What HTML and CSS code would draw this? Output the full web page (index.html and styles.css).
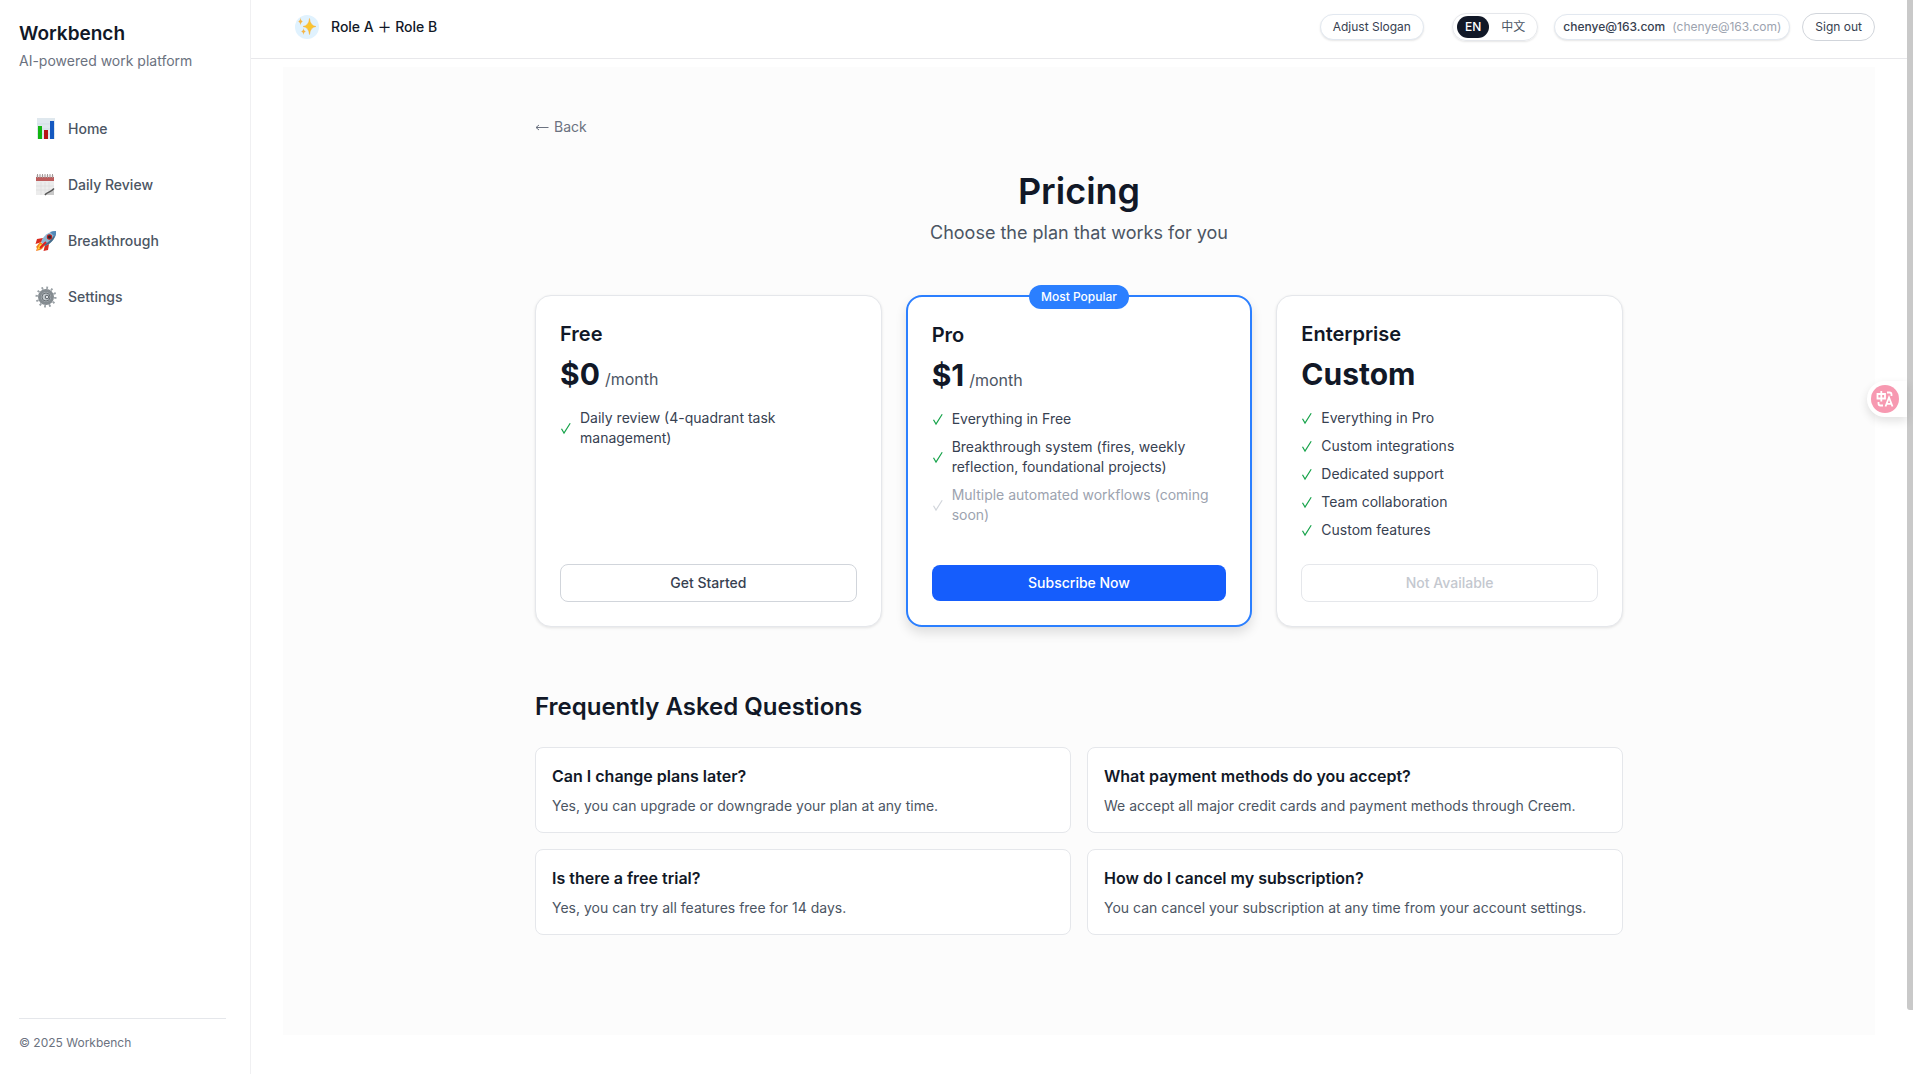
FILE: index.html
```html
<!DOCTYPE html>
<html lang="en">
<head>
<meta charset="utf-8">
<title>Pricing – Workbench</title>
<meta name="viewport" content="width=device-width, initial-scale=1">
<link rel="stylesheet" href="styles.css">
</head>
<body>
<svg class="sprite" aria-hidden="true">
  <symbol id="check" viewBox="0 0 12 16"><path d="M1.5 8.8 4 13 10.2 3.2" fill="none" stroke="currentColor" stroke-width="1.2"/></symbol>
</svg>
<div class="app">
  <aside class="sidebar">
    <div class="brand">Workbench</div>
    <p class="tagline">AI-powered work platform</p>
    <nav class="nav">
      <a class="nav-item" href="#home">
        <svg class="nav-icon" viewBox="0 0 22 22"><rect x="2" y="0" width="18" height="21" fill="#dfe8ee"/><path d="M2 6h18M2 11h18M2 16h18" stroke="#cbd8e2" stroke-width=".6"/><rect x="3" y="8" width="4" height="13" fill="#12b512"/><rect x="9" y="12" width="4" height="9" fill="#b81414"/><rect x="15" y="3" width="4" height="18" fill="#1458c0"/></svg>
        Home</a>
      <a class="nav-item" href="#daily">
        <svg class="nav-icon" viewBox="0 0 22 22"><path d="M1 1h18v20H1z" fill="#ececec"/><path d="M1 12h18M1 16h18M6 8v13M10 8v13M14 8v13" stroke="#dadada" stroke-width=".6"/><path d="M1 3h18v4H1z" fill="#bd5c5c"/><path d="M2.500 0v4M5 0v4M7.500 0v4M10 0v4M12.500 0v4M15 0v4M17.500 0v4" stroke="#a39797"/><path d="M10 21q2-3 9-6v6z" fill="#c8c8c8"/><path d="M10 21c2-3 5-2 9-6.500" fill="none" stroke="#555" stroke-width="1.500"/></svg>
        Daily Review</a>
      <a class="nav-item" href="#breakthrough">
        <svg class="nav-icon" viewBox="0 0 22 22"><path d="M8 8 2 9l-1.500 5L7 12zM14 14l-1 6-4.500 1L10 15z" fill="#d92b20"/><path d="m5 12-4 5 1 1-1 3 4-1 2-1 3-4z" fill="#f58220"/><path d="m5 14-3 6 5-3 1-2z" fill="#ffe03a"/><path d="M21 1c-7 0-13 5-15 11l4 4C17 13 21 8 21 1z" fill="#8fb6d2"/><path d="M21 1c-2 6-6 11-12.500 13.500L10 16C17 13 21 8 21 1z" fill="#476c89"/><path d="M21 1c-2 0-4 .4-6 1l5 5c.7-2 1-4 1-6z" fill="#5289b9"/><circle cx="14.500" cy="7" r="2.700" fill="#b51f1f"/><circle cx="14.500" cy="7" r="1.600" fill="#252b38"/><path d="m5 18 6-6" stroke="#e02020" stroke-width="2"/></svg>
        Breakthrough</a>
      <a class="nav-item" href="#settings">
        <svg class="nav-icon" viewBox="0 0 22 22"><circle cx="11" cy="11" r="9.300" fill="none" stroke="#9aa1a6" stroke-width="2.400" stroke-dasharray="1.800 3.069"/><circle cx="11" cy="11" r="6.500" fill="#a7adb2" stroke="#858c91" stroke-width="3"/><circle cx="11" cy="11" r="4" fill="#c3c9cd" stroke="#6b7277"/><circle cx="12" cy="11" r="1.800" fill="#dfe3e6" stroke="#596066"/></svg>
        Settings</a>
    </nav>
    <footer class="side-footer">© 2025 Workbench</footer>
  </aside>

  <div class="main">
    <header class="topbar">
      <div class="slogan">
        <span class="slogan-icon"><svg viewBox="0 0 24 24"><path d="M14.500 3.500q.7 7.300 6.500 8-5.800.7-6.500 8-.7-7.300-6.500-8 5.800-.7 6.500-8z" fill="#fac52f" stroke="#f5ad3c" stroke-width=".5"/><path d="M5.500 2.500q.3 3.700 2.700 4-2.400.3-2.700 4-.3-3.700-2.700-4 2.400-.3 2.700-4zM8.500 13q.3 3.200 2.700 3.500-2.400.3-2.700 3.500-.3-3.200-2.700-3.500 2.400-.3 2.700-3.500z" fill="#f6b547"/></svg></span>
        <span class="slogan-text">Role A ＋ Role B</span>
        <button class="pill adjust">Adjust Slogan</button>
      </div>
      <div class="account">
        <div class="lang"><button class="lang-btn active">EN</button><button class="lang-btn">中文</button></div>
        <div class="pill user"><span>chenye@163.com</span><span class="muted">(chenye@163.com)</span></div>
        <button class="pill sign-out">Sign out</button>
      </div>
    </header>

    <main class="page">
      <div class="container">
        <a class="back" href="#back"><svg class="arrow" viewBox="0 0 14 10"><path d="M13.500 5.500H1M4 3 1 5.500 4 8" fill="none" stroke="currentColor"/></svg>Back</a>
        <div class="intro">
          <h1>Pricing</h1>
          <p>Choose the plan that works for you</p>
        </div>

        <section class="plans">
          <article class="plan">
            <h2>Free</h2>
            <div class="price">$0 <span>/month</span></div>
            <ul>
              <li><svg><use href="#check"/></svg>Daily review (4-quadrant task management)</li>
            </ul>
            <button class="btn">Get Started</button>
          </article>
          <article class="plan featured">
            <span class="badge">Most Popular</span>
            <h2>Pro</h2>
            <div class="price">$1 <span>/month</span></div>
            <ul>
              <li><svg><use href="#check"/></svg>Everything in Free</li>
              <li><svg><use href="#check"/></svg>Breakthrough system (fires, weekly reflection, foundational projects)</li>
              <li class="soon"><svg><use href="#check"/></svg>Multiple automated workflows (coming soon)</li>
            </ul>
            <button class="btn primary">Subscribe Now</button>
          </article>
          <article class="plan">
            <h2>Enterprise</h2>
            <div class="price">Custom</div>
            <ul>
              <li><svg><use href="#check"/></svg>Everything in Pro</li>
              <li><svg><use href="#check"/></svg>Custom integrations</li>
              <li><svg><use href="#check"/></svg>Dedicated support</li>
              <li><svg><use href="#check"/></svg>Team collaboration</li>
              <li><svg><use href="#check"/></svg>Custom features</li>
            </ul>
            <button class="btn" disabled>Not Available</button>
          </article>
        </section>

        <section class="faq">
          <h2>Frequently Asked Questions</h2>
          <div class="faq-grid">
            <article><h3>Can I change plans later?</h3><p>Yes, you can upgrade or downgrade your plan at any time.</p></article>
            <article><h3>What payment methods do you accept?</h3><p>We accept all major credit cards and payment methods through Creem.</p></article>
            <article><h3>Is there a free trial?</h3><p>Yes, you can try all features free for 14 days.</p></article>
            <article><h3>How do I cancel my subscription?</h3><p>You can cancel your subscription at any time from your account settings.</p></article>
          </div>
        </section>
      </div>
    </main>
  </div>
  <div class="scrollbar"></div>
</div>
<button class="translate" aria-label="Translate">
  <svg viewBox="0 0 28 28"><circle cx="14" cy="14" r="14" fill="#f799b1"/><g fill="none" stroke="#fff" stroke-width="1.800"><path d="M6.500 9h7.500v4.500H6.500zM10.300 6v10.500"/><path d="M16 7.500h2.500q2 0 2 2V11M12 20.500H9.500q-2 0-2-2V17"/><path d="m14.500 21.500 3.500-9 3.500 9M15.800 18.800h4.500"/></g></svg>
</button>
</body>
</html>
```
FILE: styles.css
```css
* { box-sizing: border-box; }
body, h1, h2, h3, p, ul { margin: 0; padding: 0; }
body {
  font-family: Inter, "Noto Sans CJK SC", sans-serif;
  font-size: 14px;
  line-height: 20px;
  color: #111827;
  background: #fff;
}
button { font: inherit; color: inherit; cursor: pointer; }
a { color: inherit; text-decoration: none; }
.sprite { display: none; }
.app { display: flex; min-height: 100vh; }

/* Sidebar */
.sidebar {
  display: flex;
  flex-direction: column;
  flex: none;
  width: 251px;
  padding: 20px 24px 23px 19px;
  border-right: 1px solid #f0f0f2;
}
.brand { font-size: 19px; line-height: 28px; font-weight: 600; }
.tagline { margin-top: 3px; color: #6b7280; }
.nav { display: flex; flex-direction: column; gap: 16px; margin-top: 38px; }
.nav-item {
  display: flex;
  align-items: center;
  gap: 11px;
  height: 40px;
  padding-left: 16px;
  font-weight: 500;
  color: #4b5563;
}
.nav-icon { width: 22px; height: 22px; }
.side-footer {
  margin-top: auto;
  padding-top: 16px;
  border-top: 1px solid #e5e7eb;
  font-size: 12px;
  line-height: 16px;
  color: #6b7280;
}

/* Header */
.main { flex: 1; min-width: 0; }
.topbar {
  display: flex;
  align-items: center;
  gap: 16px;
  height: 59px;
  padding: 0 32px 4px;
  border-bottom: 1px solid #e8e8eb;
}
.slogan {
  display: flex;
  align-items: center;
  flex: 1;
  padding: 6px 12px;
  border-radius: 8px;
}
.slogan-icon { width: 24px; height: 24px; border-radius: 50%; background: #e0f2fe; }
.slogan-icon svg { display: block; }
.slogan-text { margin-left: 12px; font-weight: 500; }
.pill {
  height: 26px;
  padding: 0 12px;
  border: 1px solid #e2e8f0;
  border-radius: 13px;
  background: #fff;
  font-size: 12px;
  line-height: 16px;
  font-weight: 500;
  color: #374151;
  box-shadow: 0 1px 2px #0000001a;
}
.adjust { margin-left: auto; font-weight: 400; }
.account { display: flex; align-items: center; }
.lang {
  display: flex;
  gap: 4px;
  height: 28px;
  padding: 2px 4px;
  border: 1px solid #e5e7eb;
  border-radius: 14px;
  box-shadow: 0 1px 2px #0000001a;
}
.lang-btn {
  padding: 0 8px;
  border: 0;
  border-radius: 11px;
  background: none;
  font-size: 12px;
  line-height: 16px;
  color: #4b5563;
  min-width: 40px;
}
.lang-btn.active { min-width: 32px; background: #111827; color: #fff; font-weight: 500; }
.user { display: flex; align-items: center; gap: 7px; margin-left: 16px; padding: 0 8px; }
.muted { font-weight: 400; color: #9ca3af; }
.sign-out { height: 28px; margin-left: 12px; border-color: #d1d5db; border-radius: 14px; box-shadow: none; font-weight: 400; }

/* Page */
.page { margin: 8px 32px 39px; background: #fcfcfc; }
.container { max-width: 1152px; margin: 0 auto; padding: 48px 32px 100px; }
.back { display: inline-flex; align-items: center; gap: 5px; height: 24px; color: #6b7280; }
.arrow { width: 14px; height: 10px; }
.intro { margin: 32px 0 48px; text-align: center; }
h1 { font-size: 36px; line-height: 40px; font-weight: 600; }
.intro p { margin-top: 8px; font-size: 18px; line-height: 28px; color: #4b5563; }

.plans { display: grid; grid-template-columns: repeat(3, minmax(0, 1fr)); gap: 24px; }
.plan {
  position: relative;
  display: flex;
  flex-direction: column;
  padding: 24px;
  border: 1px solid #e5e7eb;
  border-radius: 16px;
  background: #fff;
  box-shadow: 0 1px 3px #0000001a;
}
.plan.featured { border: 2px solid #2b7fff; box-shadow: 0 6px 12px #0000001f; }
.plan h2 { font-size: 20px; line-height: 28px; font-weight: 600; }
.badge {
  position: absolute;
  top: -12px;
  left: 50%;
  transform: translateX(-50%);
  padding: 4px 12px;
  border-radius: 12px;
  background: #2b7fff;
  color: #fff;
  font-size: 12px;
  line-height: 16px;
  font-weight: 500;
  white-space: nowrap;
}
.price { display: flex; align-items: baseline; gap: 5px; margin-top: 8px; font-size: 30px; line-height: 36px; font-weight: 700; }
.price span { font-size: 16px; line-height: 24px; font-weight: 400; color: #4b5563; }
.plan ul { display: flex; flex-direction: column; gap: 8px; margin: 16px 0 24px; list-style: none; }
.plan li { display: flex; align-items: center; gap: 8px; color: #374151; }
.plan li svg { flex: none; width: 12px; height: 16px; color: #16a34a; }
.plan li.soon { color: #9ca3af; }
.plan li.soon svg { color: #d1d5db; }
.btn {
  width: 100%;
  margin-top: auto;
  padding: 8px 16px;
  border: 1px solid #d1d5db;
  border-radius: 8px;
  background: #fff;
  font-weight: 500;
  color: #374151;
}
.btn.primary { border: 0; background: #155dfc; color: #fff; }
.btn:disabled { border-color: #e5e7eb; color: #c4c8cf; }

.faq { margin-top: 64px; }
.faq h2 { font-size: 24px; line-height: 32px; font-weight: 600; }
.faq-grid { display: grid; grid-template-columns: 1fr 1fr; gap: 16px; margin-top: 24px; }
.faq article { padding: 16px; border: 1px solid #e5e7eb; border-radius: 8px; background: #fff; }
.faq h3 { font-size: 16px; line-height: 24px; font-weight: 600; }
.faq p { margin-top: 8px; color: #4b5563; }

/* Overlays at the window's right edge */
.scrollbar { flex: none; width: 6px; height: 94vh; border-radius: 0 0 0 3px; background: #c9c9c9; }
.translate {
  position: fixed;
  top: 381px;
  right: 6px;
  width: 40px;
  height: 36px;
  padding: 4px;
  border: 0;
  border-radius: 18px 0 0 18px;
  background: #fff;
  box-shadow: 0 4px 10px #0000001f;
}
.translate svg { display: block; width: 28px; height: 28px; }
```
